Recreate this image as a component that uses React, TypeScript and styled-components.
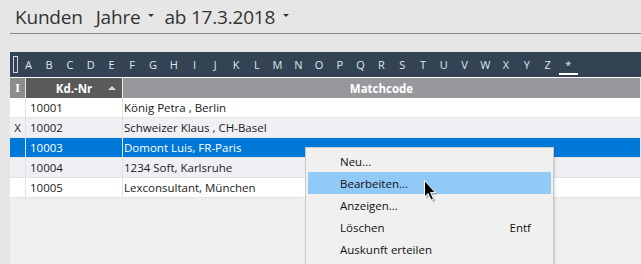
import React from "react";
import styled, { createGlobalStyle } from "styled-components";

const Global = createGlobalStyle`
  html, body { margin: 0; padding: 0; background: #e6e6e6; overflow: hidden; }
  body { font-family: "Segoe UI", "Noto Sans", "Open Sans", sans-serif; }
`;

const Page = styled.div`
  position: relative;
  width: 641px;
  height: 264px;
  padding-left: 10px;
  box-sizing: border-box;
  display: flex;
  flex-direction: column;
`;

const TitleBar = styled.div`
  height: 33px;
  border-bottom: 1px solid #8a8a8a;
  display: flex;
  align-items: center;
  padding-left: 5px;
  gap: 10px;
  font-size: 19px;
  color: #333;
  font-family: "Open Sans", sans-serif;
`;

const TitleItem = styled.span<{ $spaced?: boolean }>`
  display: inline-flex;
  align-items: center;
  gap: 8px;
  padding-top: 1px;
  letter-spacing: -0.2px;
  margin-right: ${(p) => (p.$spaced ? "3px" : "0")};
`;

const Caret = styled.span`
  width: 0;
  height: 0;
  border-left: 3px solid transparent;
  border-right: 3px solid transparent;
  border-top: 3px solid #333;
  margin-top: -3px;
`;

const LetterBar = styled.div`
  margin-top: 18px;
  height: 25px;
  background: #344353;
  display: flex;
  align-items: center;
  font-family: "Open Sans", sans-serif;
  font-size: 11px;
  color: #dce6f2;
  border-bottom: 1px solid #fff;
`;

const Cursor = styled.span`
  width: 3px;
  height: 15px;
  border: 1px solid #cfd6de;
  margin-left: 3px;
  margin-right: 0;
`;

const Letter = styled.span<{ $active?: boolean }>`
  width: 20.77px;
  flex: none;
  text-align: center;
  height: 25px;
  line-height: 25px;
  box-sizing: border-box;
  position: relative;
  ${(p) =>
    p.$active &&
    `&::after{content:"";position:absolute;left:1px;right:1px;bottom:2px;height:2px;background:#fff;}`}
`;

const Grid = styled.div`
  flex: 1;
  background: #efefef;
  display: flex;
  flex-direction: column;
  font-family: "Segoe UI", "Open Sans", sans-serif;
`;

const HeaderRow = styled.div`
  display: grid;
  grid-template-columns: 16px 97px 1fr;
  height: 20px;
  font-weight: bold;
  color: #fff;
  font-size: 11.5px;
`;

const HeadCell = styled.div<{ $bg: string; $serif?: boolean }>`
  background: ${(p) => p.$bg};
  display: flex;
  align-items: center;
  justify-content: center;
  position: relative;
  border-right: 1px solid #e8e8e8;
  ${(p) => p.$serif && `font-family: "Liberation Serif", serif; font-size: 13px;`}
`;

const SortArrow = styled.span`
  position: absolute;
  right: 6px;
  top: 8px;
  width: 0;
  height: 0;
  border-left: 4px solid transparent;
  border-right: 4px solid transparent;
  border-bottom: 4px solid #d8d8d8;
`;

const Row = styled.div<{ $bg: string; $fg?: string }>`
  display: grid;
  grid-template-columns: 16px 97px 1fr;
  height: 20px;
  background: ${(p) => p.$bg};
  color: ${(p) => p.$fg || "#1a1a1a"};
  font-size: 11.5px;
  box-sizing: border-box;
  border-bottom: 1px solid #e4e4e4;
`;

const Cell = styled.div<{ $center?: boolean; $pad?: number }>`
  display: flex;
  align-items: center;
  padding-left: ${(p) => (p.$pad ?? 4)}px;
  justify-content: ${(p) => (p.$center ? "center" : "flex-start")};
  border-right: 1px solid #e2e2e2;
  white-space: nowrap;
  overflow: hidden;
`;

const Menu = styled.div`
  position: absolute;
  left: 305px;
  top: 147px;
  width: 249px;
  height: 120px;
  background: #f0f0f0;
  border: 1px solid #c9c9c9;
  box-shadow: 1px 1px 2px rgba(0,0,0,0.15);
  padding: 2px 2px;
  box-sizing: border-box;
  font-family: "Segoe UI", "Open Sans", sans-serif;
  font-size: 11.5px;
  color: #111;
`;

const MenuItem = styled.div<{ $hover?: boolean }>`
  height: 22px;
  display: flex;
  align-items: center;
  justify-content: space-between;
  padding-left: 32px;
  padding-right: 20px;
  background: ${(p) => (p.$hover ? "#91c9f7" : "transparent")};
`;

const MenuSeparator = styled.div`
  margin: 4px 0 0 28px;
  height: 1px;
  background: #d7d7d7;
`;

const Pointer = styled.svg`
  position: absolute;
  left: 423px;
  top: 179px;
`;

const rows = [
  { mark: "", nr: "10001", name: "König Petra , Berlin", bg: "#ffffff" },
  { mark: "X", nr: "10002", name: "Schweizer Klaus , CH-Basel", bg: "#f0f0f4" },
  { mark: "", nr: "10003", name: "Domont Luis, FR-Paris", bg: "#0078d7", fg: "#ffffff" },
  { mark: "", nr: "10004", name: "1234 Soft, Karlsruhe", bg: "#f0f0f4" },
  { mark: "", nr: "10005", name: "Lexconsultant, München", bg: "#ffffff" },
];

const letters = "ABCDEFGHIJKLMNOPQRSTUVWXYZ".split("");

export default function App() {
  return (
    <>
      <Global />
      <Page>
        <TitleBar>
          <TitleItem $spaced>Kunden</TitleItem>
          <TitleItem>
            Jahre <Caret />
          </TitleItem>
          <TitleItem>
            ab 17.3.2018 <Caret />
          </TitleItem>
        </TitleBar>
        <LetterBar>
          <Cursor />
          {letters.map((l) => (
            <Letter key={l}>{l}</Letter>
          ))}
          <Letter $active>*</Letter>
        </LetterBar>
        <Grid>
          <HeaderRow>
            <HeadCell $bg="#8c8c8e" $serif>I</HeadCell>
            <HeadCell $bg="#5a5a5a">
              Kd.-Nr
              <SortArrow />
            </HeadCell>
            <HeadCell $bg="#98989c">Matchcode</HeadCell>
          </HeaderRow>
          {rows.map((r) => (
            <Row key={r.nr} $bg={r.bg} $fg={r.fg}>
              <Cell $center $pad={0}>{r.mark}</Cell>
              <Cell>{r.nr}</Cell>
              <Cell $pad={1}>{r.name}</Cell>
            </Row>
          ))}
        </Grid>
        <Menu>
          <MenuItem>Neu...</MenuItem>
          <MenuItem $hover>Bearbeiten...</MenuItem>
          <MenuItem>Anzeigen...</MenuItem>
          <MenuItem>
            <span>Löschen</span>
            <span>Entf</span>
          </MenuItem>
          <MenuItem>Auskunft erteilen</MenuItem>
          <MenuSeparator />
        </Menu>
        <Pointer width="16" height="24" viewBox="0 0 16 24">
          <path d="M2.5 2.5 L2.5 19 L6 15.5 L9 22 L11.5 21 L8.6 14.6 L13.5 14.6 Z" fill="rgba(0,0,0,0.25)" transform="translate(1,1)" />
          <path d="M1.5 1.5 L1.5 18 L5 14.5 L8 21 L10.5 20 L7.6 13.6 L12.5 13.6 Z" fill="#000" stroke="#fff" strokeWidth="1" />
        </Pointer>
      </Page>
    </>
  );
}
